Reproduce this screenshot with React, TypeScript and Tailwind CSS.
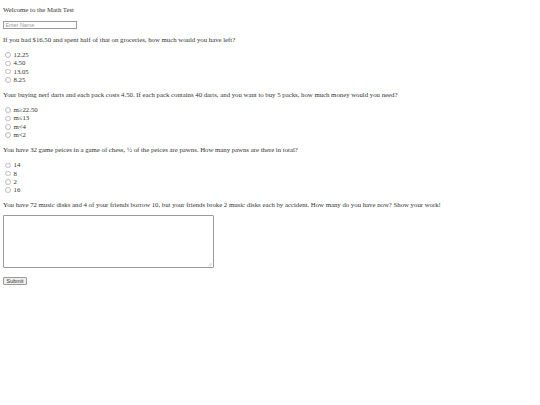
import React from "react";

const serif = "font-['Liberation_Serif',serif]";

function Radio({ label, name }: { label: string; name: string }) {
  return (
    <label className="flex h-[8.33px] items-center">
      <span className="ml-[2px] mr-[3px] box-border inline-block h-[5.5px] w-[5.5px] rounded-full border-[0.5px] border-[#bcbcbc] bg-white" />
      <span className="leading-[8px]">{label}</span>
      <input type="radio" name={name} className="hidden" />
    </label>
  );
}

function Question({ q, opts, name }: { q: string; opts: string[]; name: string }) {
  return (
    <div>
      <p className="mt-[7px] h-[8px] leading-[8px] whitespace-nowrap">{q}</p>
      <div className="mt-[6.8px]">
        {opts.map((o) => (
          <Radio key={o} label={o} name={name} />
        ))}
      </div>
    </div>
  );
}

export default function App() {
  return (
    <div className={`${serif} w-[540px] h-[405px] bg-white text-[6.78px] text-[#333333] px-[3px] pt-[6px]`}>
      <p className="h-[8px] leading-[8px]">Welcome to the Math Test</p>
      <div className="mt-[6.7px] box-border h-[8.4px] w-[74px] border-[0.6px] border-[#9a9a9a] px-[1.5px] flex items-center">
        <span className="font-['Liberation_Sans',sans-serif] text-[5.4px] leading-[6px] text-[#999999]">Enter Name</span>
      </div>
      <Question
        name="q1"
        q="If you had $16.50 and spent half of that on groceries, how much would you have left?"
        opts={["12.25", "4.50", "13.05", "8.25"]}
      />
      <Question
        name="q2"
        q="Your buying nerf darts and each pack costs 4.50. If each pack contains 40 darts, and you want to buy 5 packs, how much money would you need?"
        opts={["m≥22.50", "m≤13", "m<4", "m<2"]}
      />
      <Question
        name="q3"
        q="You have 32 game peices in a game of chess, ½ of the peices are pawns. How many pawns are there in total?"
        opts={["14", "8", "2", "16"]}
      />
      <p className="mt-[7px] h-[8px] leading-[8px] whitespace-nowrap">
        You have 72 music disks and 4 of your friends borrow 10, but your friends broke 2 music disks each by accident. How many do you have now? Show your work!
      </p>
      <div className="relative mt-[6px] box-border h-[53px] w-[211px] rounded-[1px] border-[0.6px] border-[#9a9a9a] bg-white">
        <svg className="absolute bottom-[1px] right-[1px]" width="4" height="4" viewBox="0 0 4 4">
          <line x1="0.5" y1="3.8" x2="3.8" y2="0.5" stroke="#a5a5a5" strokeWidth="0.5" />
          <line x1="2.2" y1="3.8" x2="3.8" y2="2.2" stroke="#a5a5a5" strokeWidth="0.5" />
        </svg>
      </div>
      <div className="mt-[9px] box-border flex h-[8px] w-[24px] items-center justify-center rounded-[1px] border-[0.6px] border-[#9a9a9a] bg-[#efefef]">
        <span className="font-['Liberation_Sans',sans-serif] text-[5.4px] leading-[6px] text-[#333333]">Submit</span>
      </div>
    </div>
  );
}
